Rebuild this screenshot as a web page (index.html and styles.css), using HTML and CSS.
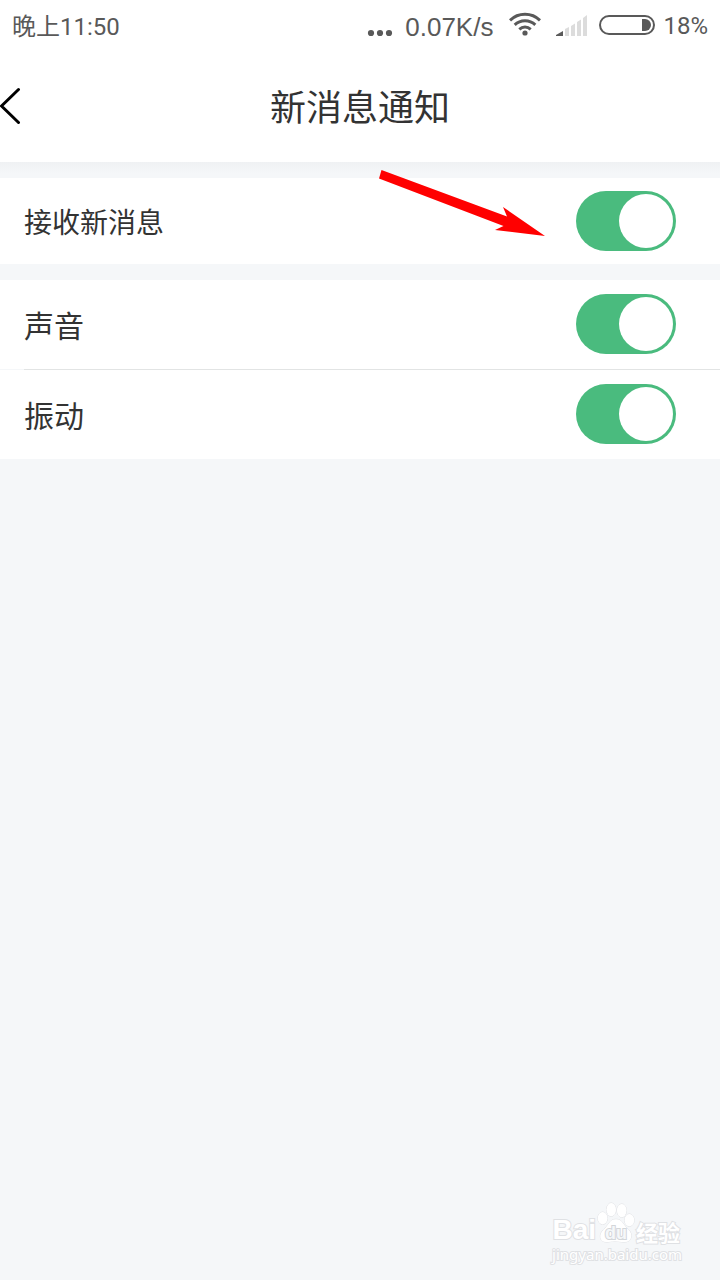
FILE: index.html
```html
<!DOCTYPE html>
<html lang="zh-CN">
<head>
<meta charset="utf-8">
<meta name="viewport" content="width=device-width, initial-scale=1">
<title>新消息通知</title>
<link rel="stylesheet" href="styles.css">
</head>
<body>
<div class="status">
  <span class="time">晚上11:50</span>
  <div class="status-right">
    <svg class="dots" width="26" height="8" viewBox="0 0 26 8"><circle cx="4" cy="4" r="3.1"/><circle cx="13" cy="4" r="3.1"/><circle cx="22" cy="4" r="3.1"/></svg>
    <span class="speed">0.07K/s</span>
    <svg class="wifi" width="32" height="24" viewBox="0 0 32 24"><g fill="none" stroke="#595959" stroke-width="3"><path d="M1 8.400A21.500 21.500 0 0 1 31 8.400"/><path d="M5.700 12.800A15 15 0 0 1 26.300 12.800"/><path d="M10.300 17.300A8.500 8.500 0 0 1 21.700 17.300"/></g><circle cx="16" cy="21" r="2.600" fill="#595959"/></svg>
    <svg class="signal" width="32" height="22" viewBox="0 0 32 22"><path fill="#595959" d="M0 21v-1l7-4v5z"/><path fill="#dcdcdc" d="M9 21v-7l4-2v9zM15 21V11l4-2.500V21zM21 21V7l4-2.500V21zM27 21V3l4-3v21z"/></svg>
    <svg class="battery" width="56" height="20" viewBox="0 0 56 20"><rect x="1" y="1" width="54" height="18" rx="9" fill="#fff" stroke="#595959" stroke-width="2"/><path fill="#595959" d="M43 4h3a6 6 0 0 1 0 12h-3z"/></svg>
    <span class="percent">18%</span>
  </div>
</div>
<header class="header">
  <button class="back" type="button" aria-label="返回"><svg width="21" height="38" viewBox="0 0 21 38"><path d="M18.500 2.500L1.500 19l17 16.500" fill="none" stroke="#000" stroke-width="3" stroke-linecap="round" stroke-linejoin="round"/></svg></button>
  <h1 class="title">新消息通知</h1>
</header>
<main class="settings">
  <section class="group">
    <div class="row row-main"><label class="label label-main" for="receive">接收新消息</label><input class="switch" id="receive" type="checkbox" role="switch" checked></div>
    <svg class="pointer" width="168" height="70" viewBox="0 0 168 70"><path fill="#f00" d="M2.500 0L128 46.500L124 37L166 66L116 60L124.500 56L0 8.500Z"/></svg>
  </section>
  <section class="group">
    <div class="row"><label class="label" for="sound">声音</label><input class="switch" id="sound" type="checkbox" role="switch" checked></div>
    <div class="divider"></div>
    <div class="row"><label class="label" for="vibrate">振动</label><input class="switch" id="vibrate" type="checkbox" role="switch" checked></div>
  </section>
</main>
<footer class="watermark">
  <div class="brand">
    <span class="brand-bai">Bai</span>
    <span class="paw"><svg width="40" height="42" viewBox="0 0 40 44"><g fill="#fff" stroke="#dfe1e4" stroke-width="1"><ellipse cx="6" cy="17" rx="5" ry="6.500"/><ellipse cx="15" cy="8" rx="5" ry="7"/><ellipse cx="26" cy="9" rx="5" ry="7"/><ellipse cx="34" cy="19" rx="5" ry="6.500"/><path d="M20 18C27 18 28 25 33 29C38 33 37 42 29 42C25 42 22 41 19 41C15 41 13 42 10 42C2 42 2 33 7 29C12 25 13 18 20 18Z"/></g></svg><span class="paw-text">du</span></span>
    <span class="brand-name">经验</span>
  </div>
  <span class="site">jingyan.baidu.com</span>
</footer>
</body>
</html>
```
FILE: styles.css
```css
* {
  box-sizing: border-box;
}

body {
  display: flex;
  flex-direction: column;
  min-height: 100vh;
  margin: 0;
  background: #f5f7f9;
  color: #333;
  font-family: "Noto Sans CJK SC", sans-serif;
}

svg {
  display: block;
}

.status {
  display: flex;
  justify-content: space-between;
  height: 50px;
  padding: 0 12px;
  background: #fff;
  color: #595959;
  font-family: Roboto, "Noto Sans CJK SC", sans-serif;
  font-size: 24px;
  line-height: 54px;
}

.status-right {
  display: flex;
  align-items: flex-start;
}

.dots {
  margin: 29px 12px 0 0;
  fill: #595959;
}

.speed {
  margin-right: 16px;
  font-family: "Liberation Sans", sans-serif;
  font-size: 26px;
}

.wifi {
  margin: 12px 15px 0 0;
}

.signal {
  margin: 15px 11px 0 0;
}

.battery {
  margin: 15px 8px 0 0;
}

.percent {
  line-height: 52px;
}

.header {
  display: grid;
  grid-template-columns: 48px 1fr 48px;
  align-items: center;
  height: 112px;
  background: #fff;
}

.back {
  padding: 0;
  border: 0;
  background: none;
}

.title {
  margin: 0;
  padding-bottom: 2px;
  font-size: 36px;
  font-weight: 400;
  line-height: 52px;
  text-align: center;
}

.settings {
  display: flex;
  flex: 1;
  flex-direction: column;
  gap: 16px;
  padding-top: 16px;
  background: linear-gradient(#eff1f3, #f5f7f9 12px);
}

.group {
  position: relative;
  background: #fff;
}

.row {
  display: flex;
  align-items: center;
  justify-content: space-between;
  min-height: 89px;
  padding: 0 44px 1px 24px;
}

.row-main {
  min-height: 86px;
  padding-bottom: 0;
}

.label {
  font-size: 30px;
  line-height: 44px;
}

.label-main {
  font-size: 28px;
}

.divider {
  height: 1px;
  border-left: 24px solid #f5f7f9;
  background: #e2e4e4;
}

.switch {
  display: flex;
  justify-content: flex-end;
  width: 100px;
  height: 60px;
  margin: 0;
  padding: 3px;
  border-radius: 30px;
  background: #4abb7e;
  appearance: none;
}

.switch::before {
  width: 54px;
  height: 54px;
  border-radius: 50%;
  background: #fff;
  content: "";
}

.switch:not(:checked) {
  justify-content: flex-start;
  background: #ccc;
}

.pointer {
  position: absolute;
  top: -8px;
  left: 379px;
  pointer-events: none;
}

.watermark {
  display: flex;
  flex-direction: column;
  align-items: flex-end;
  padding: 0 38px 16px 0;
  color: #fff;
  -webkit-text-stroke: 2px #dfe1e4;
  paint-order: stroke fill;
}

.brand {
  display: flex;
  align-items: flex-end;
  font-weight: 700;
}

.brand-bai {
  font-family: "Liberation Sans", sans-serif;
  font-size: 28px;
  line-height: 28px;
}

.paw {
  position: relative;
}

.paw-text {
  position: absolute;
  right: 0;
  bottom: 0;
  left: 0;
  color: #f5f7f9;
  font-family: "Liberation Sans", sans-serif;
  font-size: 18px;
  line-height: 22px;
  text-align: center;
  -webkit-text-stroke-color: #d3d6d9;
}

.brand-name {
  margin-right: 2px;
  font-size: 22px;
  line-height: 26px;
}

.site {
  font-family: "Noto Sans", sans-serif;
  font-size: 15px;
  line-height: 20px;
}
```
